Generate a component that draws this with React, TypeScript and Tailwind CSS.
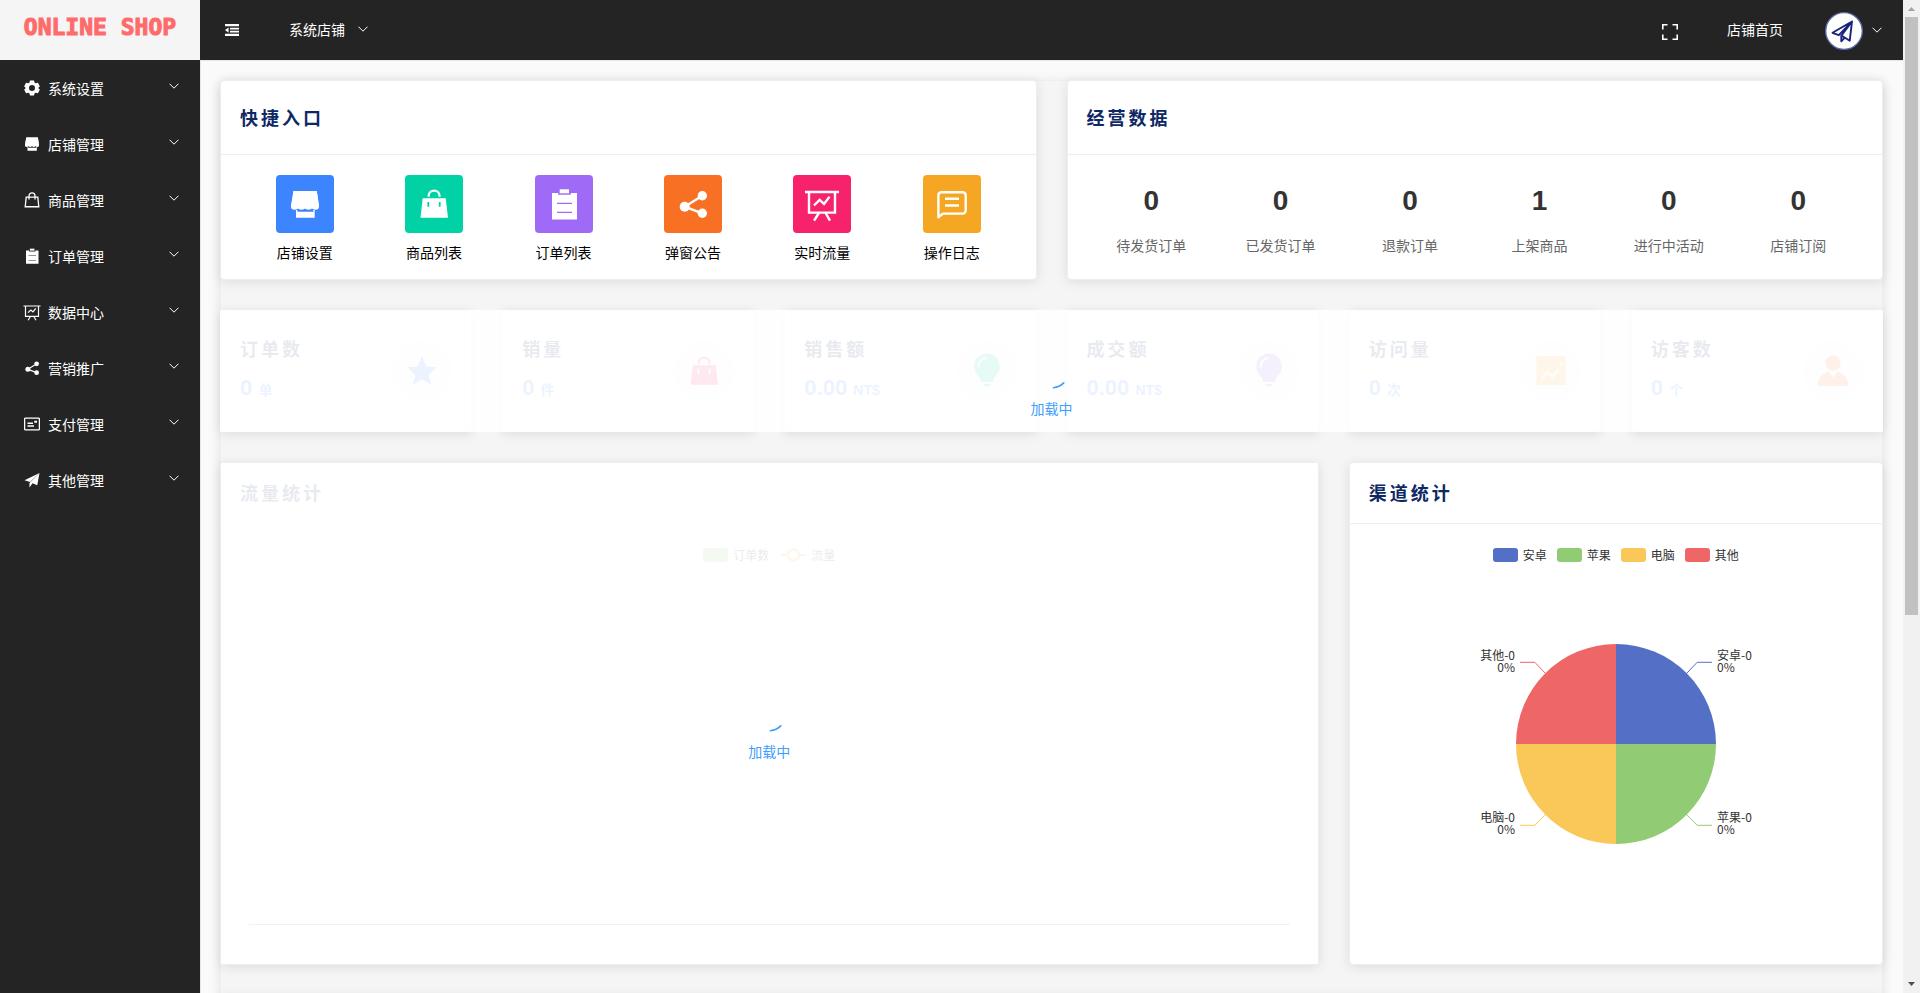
import React from 'react';
import clsx from 'clsx';

type IconProps = { className?: string };

const ShopIcon = ({ className }: IconProps) => (
  <svg viewBox="0 0 32 32" fill="currentColor" className={className}>
    <path d="M4.5 3h23.3L30 18.3a3.5 3.5 0 0 1-7 0a3.5 3.5 0 0 1-7 0a3.5 3.5 0 0 1-7 0a3.5 3.5 0 0 1-7 0z" />
    <path d="M4.5 3h23.3L30 18.3q-.4 2-1.8 2.4H3.8Q2.4 20.3 2 18.3z" />
    <path d="M7 22h1.4v1.7h15.9V22h1.4v7.7H7z" />
  </svg>
);

const GoodsIcon = ({ className }: IconProps) => (
  <svg viewBox="0 0 32 32" fill="currentColor" className={className}>
    <path fillRule="evenodd" d="M4.7 10.3h23l2.3 19.5H2.5zM9.4 14v4.8h1.8V14zM20.8 14v4.8h1.8V14z" />
    <path d="M10.7 8.8V7.6a5.4 5 0 0 1 10.8 0v1.2" fill="none" stroke="currentColor" strokeWidth="2.2" />
  </svg>
);

const BagOutlineIcon = ({ className }: IconProps) => (
  <svg viewBox="0 0 32 32" fill="none" stroke="currentColor" strokeWidth="2.6" className={className}>
    <path d="M4.4 10.3h23.2l2 19.2H2.4z" />
    <path d="M10 15V7.6a6 6 0 0 1 12 0V15" />
  </svg>
);

const OrderIcon = ({ className }: IconProps) => (
  <svg viewBox="0 0 32 32" fill="currentColor" className={className}>
    <path fillRule="evenodd" d="M4 5h6.2v1.8h12.6V5H29v26.6H4zM9 14.8v1.2h15v-1.2zM9 23.8V25h15v-1.2z" />
    <path d="M11.7 1.3H21v4h-9.3z" />
  </svg>
);

const ShareIcon = ({ className }: IconProps) => (
  <svg viewBox="0 0 32 32" fill="currentColor" className={className}>
    <path d="M25.3 7.7L7.7 18.7l17.6 6.6" fill="none" stroke="currentColor" strokeWidth="2.4" />
    <circle cx="7.7" cy="18.7" r="5" />
    <circle cx="25.3" cy="7.7" r="4.7" />
    <circle cx="25.3" cy="25.3" r="4.7" />
  </svg>
);

const BoardIcon = ({ className }: IconProps) => (
  <svg viewBox="0 0 32 32" fill="none" stroke="currentColor" strokeWidth="2.4" className={clsx('overflow-visible', className)}>
    <path d="M-1 4h34M3 4v20.6h26V4" />
    <path d="M12.9 25l-4.8 7.6M19.6 25l4.4 7.6" />
    <path d="M8 17.3l5.7-5.4 4.3 4 5.5-7.2" />
  </svg>
);

const ChatIcon = ({ className }: IconProps) => (
  <svg viewBox="0 0 32 32" fill="none" stroke="currentColor" strokeWidth="2.4" className={className}>
    <path d="M2.4 29.3V7.3a3 3 0 0 1 3-3h21.3a3 3 0 0 1 3 3v15.3a3 3 0 0 1-3 3H6.9z" strokeLinejoin="round" />
    <path d="M9 10.7h14M9 17.5h14" />
  </svg>
);

const ToolsIcon = ({ className }: IconProps) => (
  <svg viewBox="0 0 32 32" fill="currentColor" className={className}>
    <path
      fillRule="evenodd"
      d="M12 1h8l1.2 4.4 2.2 1.3 4.4-1.2 3.9 6.8L28.5 16l3.2 3.7-3.9 6.8-4.4-1.2-2.2 1.3L20 31h-8l-1.2-4.4-2.2-1.3-4.4 1.2-3.9-6.8L3.5 16 .3 12.3l3.9-6.8 4.4 1.2 2.2-1.3zM16 10a6 6 0 1 0 0 12a6 6 0 0 0 0-12z"
    />
  </svg>
);

const PostcardIcon = ({ className }: IconProps) => (
  <svg viewBox="0 0 32 32" fill="none" stroke="currentColor" strokeWidth="2.6" className={className}>
    <rect x="1.2" y="4.2" width="29.6" height="23.6" rx="2" />
    <path d="M7 14.5h11M7 20h13" />
    <path d="M20.5 11.5h5.5" strokeWidth="4" />
  </svg>
);

const PromotionIcon = ({ className }: IconProps) => (
  <svg viewBox="0 0 32 32" fill="currentColor" className={className}>
    <path d="M1 16.5L31 2 12.2 19.8z" />
    <path d="M31 2l-4.5 24.5-9.5-4L11 31v-9z" />
  </svg>
);

const StarIcon = ({ className }: IconProps) => (
  <svg viewBox="0 0 32 32" fill="currentColor" className={className}>
    <path d="M16 1.2l4.3 10.3 10.2.7-7.8 7.5 2.3 9.8-9-5.3-9 5.3 2.3-9.8-7.8-7.5 10.2-.7z" />
  </svg>
);

const BulbIcon = ({ className }: IconProps) => (
  <svg viewBox="0 0 32 32" fill="currentColor" className={clsx('overflow-visible', className)}>
    <path
      fillRule="evenodd"
      d="M16-1.5c7.4 0 12.8 5.7 12.8 12.7 0 5.6-3 8.8-6.3 12.3V27H9.5v-3.5C6.2 20 3.2 16.8 3.2 11.2 3.2 4.2 8.6-1.5 16-1.5zM15.5 2.3C10 2.5 6.7 6.5 6.5 12.5h1.9C8.6 7.6 11.3 4.5 15.5 4.1z"
    />
    <path d="M12.5 29h7v2.2h-7z" />
  </svg>
);

const MarketingIcon = ({ className }: IconProps) => (
  <svg viewBox="0 0 32 32" fill="currentColor" className={className}>
    <path
      fillRule="evenodd"
      d="M1.5 1h29v29h-29zM5.5 23.5l1.5 1.5 5.4-6.2 4.9 4.4 7.4-7.6-1.7-1.7-5.9 5.8-5-4.5zM24.3 8.500v2.600H27V8.500z"
    />
  </svg>
);

const UserIcon = ({ className }: IconProps) => (
  <svg viewBox="0 0 32 32" fill="currentColor" className={className}>
    <circle cx="16" cy="8" r="7.7" />
    <path d="M.6 31c.3-7.2 4.6-12.8 11-14.4L16 22.8l4.4-6.2c6.4 1.6 10.7 7.2 11 14.4z" />
  </svg>
);

const ChevronDown = ({ className }: IconProps) => (
  <svg viewBox="0 0 10 6" fill="none" stroke="currentColor" className={clsx('w-[10px] h-[6px]', className)}>
    <path d="M.5.7L5 5.2 9.5.7" />
  </svg>
);

const FoldIcon = ({ className }: IconProps) => (
  <svg viewBox="0 0 14 12" fill="currentColor" className={className}>
    <path d="M0 0h14v2.2H0zM5 3.7h9v1.8H5zM5 6.8h9v1.8H5zM0 9.8h14V12H0zM0 6.1l3.6-2.7v5.4z" />
  </svg>
);

const menus = [
  { title: '系统设置', icon: ToolsIcon },
  { title: '店铺管理', icon: ShopIcon },
  { title: '商品管理', icon: BagOutlineIcon },
  { title: '订单管理', icon: OrderIcon },
  { title: '数据中心', icon: BoardIcon },
  { title: '营销推广', icon: ShareIcon },
  { title: '支付管理', icon: PostcardIcon },
  { title: '其他管理', icon: PromotionIcon }
];

const shortcuts = [
  { title: '店铺设置', icon: ShopIcon, color: 'bg-[#3d85ff]' },
  { title: '商品列表', icon: GoodsIcon, color: 'bg-[#00d2a5]' },
  { title: '订单列表', icon: OrderIcon, color: 'bg-[#9f6bf6]' },
  { title: '弹窗公告', icon: ShareIcon, color: 'bg-[#f77024]' },
  { title: '实时流量', icon: BoardIcon, color: 'bg-[#f6226c]' },
  { title: '操作日志', icon: ChatIcon, color: 'bg-[#f5a623]' }
];

const business = [
  { label: '待发货订单', value: 0 },
  { label: '已发货订单', value: 0 },
  { label: '退款订单', value: 0 },
  { label: '上架商品', value: 1 },
  { label: '进行中活动', value: 0 },
  { label: '店铺订阅', value: 0 }
];

const totals = [
  { title: '订单数', value: '0', unit: '单', icon: StarIcon, color: 'text-[#3d85ff]' },
  { title: '销量', value: '0', unit: '件', icon: GoodsIcon, color: 'text-[#f6226c]' },
  { title: '销售额', value: '0.00', unit: 'NT$', icon: BulbIcon, color: 'text-[#00d2a5]' },
  { title: '成交额', value: '0.00', unit: 'NT$', icon: BulbIcon, color: 'text-[#9f6bf6]' },
  { title: '访问量', value: '0', unit: '次', icon: MarketingIcon, color: 'text-[#f5a623]' },
  { title: '访客数', value: '0', unit: '个', icon: UserIcon, color: 'text-[#f77024]' }
];

const channels = [
  { name: '安卓', color: 'bg-[#5470c6]' },
  { name: '苹果', color: 'bg-[#91cc75]' },
  { name: '电脑', color: 'bg-[#fac858]' },
  { name: '其他', color: 'bg-[#ee6666]' }
];

const Card = ({ className, children }: { className?: string; children?: React.ReactNode }) => (
  <section
    className={clsx(
      'relative rounded border border-[#ebeef5] bg-white shadow-[0_2px_12px_0_rgba(0,0,0,0.1)]',
      className
    )}
  >
    {children}
  </section>
);

const CardTitle = ({ children }: { children: React.ReactNode }) => (
  <h2 className="text-lg leading-5 font-bold tracking-[3px] text-[#0d2863]">{children}</h2>
);

const Loading = () => (
  <div className="absolute inset-0 z-10 flex flex-col items-center justify-center gap-1 bg-white/90 pt-7 text-sm leading-6 text-[#409eff]">
    <svg viewBox="0 0 50 50" className="w-[42px] h-[42px]" fill="none" stroke="currentColor" strokeWidth="2" strokeLinecap="round">
      <path d="M26.7 44.9A20 20 0 0 0 39 39.2" />
    </svg>
    加载中
  </div>
);

const PieChart = () => (
  <svg viewBox="0 0 300 200" className="h-[200px] w-[300px] overflow-visible font-['Noto_Sans_CJK_SC',sans-serif] text-xs">
    <path d="M150 100V0a100 100 0 0 1 100 100z" fill="#5470c6" />
    <path d="M150 100h100a100 100 0 0 1-100 100z" fill="#91cc75" />
    <path d="M150 100v100A100 100 0 0 1 50 100z" fill="#fac858" />
    <path d="M150 100H50A100 100 0 0 1 150 0z" fill="#ee6666" />
    <g fill="none">
      <path d="M220.7 29.3l10.5-11H246" stroke="#5470c6" />
      <path d="M220.7 170.7l10.5 10.6H246" stroke="#91cc75" />
      <path d="M79.3 170.7l-10.5 10.6H54" stroke="#fac858" />
      <path d="M79.3 29.3l-10.5-11H54" stroke="#ee6666" />
    </g>
    <g fill="#333">
      <text x="251" y="16">安卓-0</text>
      <text x="251" y="28">0%</text>
      <text x="251" y="178">苹果-0</text>
      <text x="251" y="190">0%</text>
    </g>
    <g fill="#333" textAnchor="end">
      <text x="49" y="178">电脑-0</text>
      <text x="49" y="190">0%</text>
      <text x="49" y="16">其他-0</text>
      <text x="49" y="28">0%</text>
    </g>
  </svg>
);

const Sidebar = () => (
  <aside className="flex w-[200px] shrink-0 flex-col bg-[#242424] text-white">
    <a
      href="#"
      className="flex h-[60px] items-start justify-center bg-[#f5f5f5] pt-[11px] font-['DejaVu_Sans_Mono',monospace] text-[23px] leading-8 font-bold text-[#ff6b6b] [-webkit-text-stroke:1px_#ff6b6b] [stroke-linejoin:round]"
    >
      ONLINE SHOP
    </a>
    <nav>
      {menus.map(({ title, icon: Icon }) => (
        <button key={title} type="button" className="flex h-14 w-full items-center pr-[21px] pl-6 text-sm">
          <Icon className="h-4 w-4" />
          <span className="ml-2">{title}</span>
          <ChevronDown className="mb-1 ml-auto" />
        </button>
      ))}
    </nav>
  </aside>
);

const Header = () => (
  <header className="flex h-[60px] shrink-0 items-center bg-[#242424] pr-[21px] pl-[25px] text-sm text-white">
    <button type="button" aria-label="fold">
      <FoldIcon className="h-3 w-[14px]" />
    </button>
    <button type="button" className="ml-[50px] flex items-center gap-[13px] pb-0.5">
      系统店铺
      <ChevronDown />
    </button>
    <button type="button" aria-label="fullscreen" className="ml-auto">
      <svg viewBox="0 0 16 16" fill="none" stroke="currentColor" strokeWidth="1.6" className="mt-1 h-4 w-4">
        <path d="M.8 5.5V.8h4.7M10.5.8h4.7v4.7M15.2 10.5v4.7h-4.7M5.5 15.2H.8v-4.7" />
      </svg>
    </button>
    <a href="#" className="ml-[49px] pb-0.5">
      店铺首页
    </a>
    <button type="button" aria-label="account" className="ml-[42px] flex items-center gap-[9px]">
      <svg viewBox="0 0 38 38" className="mt-0.5 h-[38px] w-[38px]">
        <circle cx="19" cy="19" r="18.3" fill="#fff" stroke="#5b68a8" strokeWidth="1.3" />
        <path
          d="M27 9.5L7.5 20.8l6.3 2.4zM27 9.5L16.5 23.5l8.2 5.3zM16.3 23.5v5.8l3-3.2"
          fill="none"
          stroke="#17237d"
          strokeWidth="1.9"
          strokeLinejoin="round"
          strokeLinecap="round"
        />
      </svg>
      <ChevronDown />
    </button>
  </header>
);

const Scrollbar = () => (
  <div className="flex w-[17px] shrink-0 flex-col items-center bg-[#f1f1f1]">
    <svg viewBox="0 0 17 17" className="h-[17px] w-[17px] shrink-0">
      <path d="M5 11h7L8.5 7z" fill="#a3a3a3" />
    </svg>
    <div className="w-[13px] flex-[598] bg-[#c1c1c1]" />
    <div className="flex-[361]" />
    <svg viewBox="0 0 17 17" className="h-[17px] w-[17px] shrink-0">
      <path d="M5 6h7l-3.5 4z" fill="#505050" />
    </svg>
  </div>
);

const App = () => {
  return (
    <div className="flex h-screen overflow-hidden bg-[#fafafa] font-['Noto_Sans_CJK_SC',sans-serif]">
      <Sidebar />
      <div className="flex min-w-0 flex-1 flex-col">
        <Header />
        <main className="min-h-0 flex-1 overflow-hidden border-t border-l border-[#e6e6e6] pt-[19px] pr-5 pl-[19px]">
          <div className="flex flex-col gap-[30px] rounded border border-[#ebeef5] bg-[#f5f5f5] shadow-[0_2px_12px_0_rgba(0,0,0,0.1)]">
            <div className="-mx-px -mt-px grid grid-cols-2 gap-[30px]">
              <Card>
                <div className="flex h-[74px] items-center border-b border-[#ebeef5] px-[19px] pb-0.5">
                  <CardTitle>快捷入口</CardTitle>
                </div>
                <div className="grid grid-cols-6 px-[19px] pt-5 pb-[15px]">
                  {shortcuts.map(({ title, icon: Icon, color }) => (
                    <a key={title} href="#" className="flex flex-col items-center gap-[7px] text-sm leading-6 text-black">
                      <span className={clsx('flex h-[58px] w-[58px] items-center justify-center rounded text-white', color)}>
                        <Icon className="h-8 w-8" />
                      </span>
                      {title}
                    </a>
                  ))}
                </div>
              </Card>
              <Card>
                <div className="flex h-[74px] items-center border-b border-[#ebeef5] px-[19px] pb-0.5">
                  <CardTitle>经营数据</CardTitle>
                </div>
                <div className="grid grid-cols-6 px-[19px] pt-[26px]">
                  {business.map(({ label, value }) => (
                    <div key={label} className="flex flex-col items-center gap-3">
                      <strong className="font-['Liberation_Sans',sans-serif] text-[28px] leading-10 text-[#333]">{value}</strong>
                      <span className="text-sm leading-6 text-[#666]">{label}</span>
                    </div>
                  ))}
                </div>
              </Card>
            </div>

            <div className="relative -mx-px grid grid-cols-6 gap-[30px]">
              {totals.map(({ title, value, unit, icon: Icon, color }) => (
                <Card key={title} className="flex h-[122px] items-center justify-between px-[19px]">
                  <div className="flex flex-col gap-[14px]">
                    <CardTitle>{title}</CardTitle>
                    <p className="font-['Liberation_Sans','Noto_Sans_CJK_SC',sans-serif] text-[22px] leading-8 font-bold text-[#3d85ff]">
                      {value} <span className="text-sm">{unit}</span>
                    </p>
                  </div>
                  <span className={clsx('flex h-[60px] w-[60px] items-center justify-center rounded-full bg-[#f5f5f5]', color)}>
                    <Icon className="h-8 w-8" />
                  </span>
                </Card>
              ))}
              <Loading />
            </div>

            <div className="-mx-px grid grid-cols-3 gap-[30px]">
              <Card className="col-span-2 h-[503px]">
                <div className="flex h-[61px] items-center border-b border-[#ebeef5] px-[19px] pb-0.5">
                  <CardTitle>流量统计</CardTitle>
                </div>
                <div className="flex h-[401px] flex-col items-center px-7 pt-[21px] text-xs leading-5 text-[#333]">
                  <div className="flex items-center gap-3">
                    <span className="flex items-center gap-[5px]">
                      <i className="h-[14px] w-[25px] rounded-[3px] bg-[#91cc75]" />
                      订单数
                    </span>
                    <span className="flex items-center gap-[5px]">
                      <svg viewBox="0 0 25 14" className="h-[14px] w-[25px]" fill="none" stroke="#ff9a2e" strokeWidth="2">
                        <path d="M0 7h7M18 7h7" />
                        <circle cx="12.5" cy="7" r="5.6" />
                      </svg>
                      流量
                    </span>
                  </div>
                  <hr className="mt-auto w-full border-[#6e7079]" />
                </div>
                <Loading />
              </Card>
              <Card className="h-[503px]">
                <div className="flex h-[61px] items-center border-b border-[#ebeef5] px-[19px] pb-0.5">
                  <CardTitle>渠道统计</CardTitle>
                </div>
                <div className="flex flex-col items-center pt-[21px] text-xs leading-5 text-[#333]">
                  <div className="mb-[79px] flex items-center gap-[10px]">
                    {channels.map(({ name, color }) => (
                      <span key={name} className="flex items-center gap-[5px]">
                        <i className={clsx('h-[14px] w-[25px] rounded-[3px]', color)} />
                        {name}
                      </span>
                    ))}
                  </div>
                  <PieChart />
                </div>
              </Card>
            </div>

            <Card className="-mx-px h-[503px]" />
          </div>
        </main>
      </div>
      <Scrollbar />
    </div>
  );
};

export default App;
